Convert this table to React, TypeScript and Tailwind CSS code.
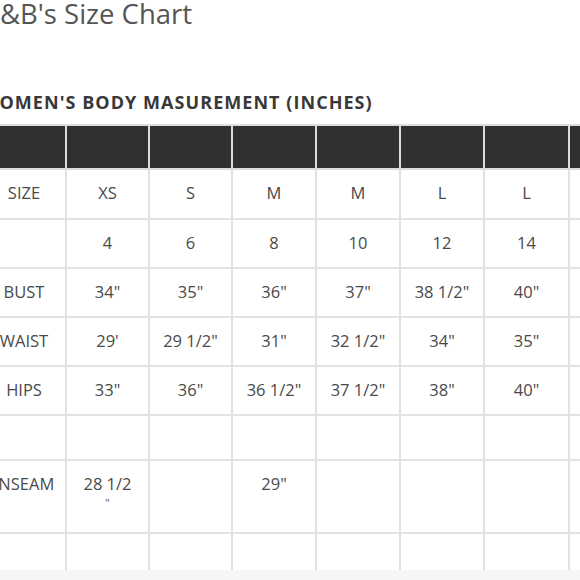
import React from 'react';

const cols = [84, 83, 83, 84, 84, 84, 85, 84];

type Row = { h: string; cells: string[][] };

const rows: Row[] = [
  { h: 'h-[50px]', cells: [['SIZE'], ['XS'], ['S'], ['M'], ['M'], ['L'], ['L'], ['']] },
  { h: 'h-[49px]', cells: [[''], ['4'], ['6'], ['8'], ['10'], ['12'], ['14'], ['']] },
  { h: 'h-[49px]', cells: [['BUST'], ['34"'], ['35"'], ['36"'], ['37"'], ['38 1/2"'], ['40"'], ['']] },
  { h: 'h-[49px]', cells: [['WAIST'], ["29'"], ['29 1/2"'], ['31"'], ['32 1/2"'], ['34"'], ['35"'], ['']] },
  { h: 'h-[49px]', cells: [['HIPS'], ['33"'], ['36"'], ['36 1/2"'], ['37 1/2"'], ['38"'], ['40"'], ['']] },
  { h: 'h-[45px]', cells: [[''], [''], [''], [''], [''], [''], [''], ['']] },
  { h: 'h-[73px]', cells: [['INSEAM'], ['28 1/2', '"'], [''], ['29"'], [''], [''], [''], ['']] },
  { h: 'h-[45px]', cells: [[''], [''], [''], [''], [''], [''], [''], ['']] },
];

const SizeChart: React.FC = () => {
  return (
    <div className="w-[580px] h-[580px] overflow-hidden bg-white font-['Open_Sans',sans-serif] flex flex-col">
      <div className="h-[570px] overflow-hidden">
        <h1 className="text-[27.5px] leading-[30px] text-[#555] mt-[-1px] whitespace-nowrap">&amp;B's Size Chart</h1>

        <h2 className="mt-[62px] ml-[-19px] text-[18px] leading-[22px] tracking-[1.05px] font-bold text-[#383838] whitespace-nowrap">
          WOMEN'S BODY MASUREMENT (INCHES)
        </h2>

        <table className="mt-[11px] ml-[-19px] border-collapse table-fixed w-[671px]">
          <colgroup>
            {cols.map((w, i) => (
              <col key={i} style={{ width: w }} />
            ))}
          </colgroup>
          <thead>
            <tr className="h-[44px]">
              {cols.map((_, i) => (
                <th key={i} className="bg-[#303030] border-2 border-[#dcdcdc]" />
              ))}
            </tr>
          </thead>
          <tbody>
            {rows.map((row, r) => (
              <tr key={r} className={row.h}>
                {row.cells.map((lines, c) => (
                  <td
                    key={c}
                    className="border-2 border-[#e2e2e2] align-top pt-[13px] text-center text-[16.5px] leading-[19px] text-[#4a4a4a]"
                  >
                    {lines.map((l, k) => (
                      <div key={k} className={k > 0 ? 'text-[11px]' : ''}>{l}</div>
                    ))}
                  </td>
                ))}
              </tr>
            ))}
          </tbody>
        </table>
      </div>
      <div className="flex-1 bg-[#f7f5f5]" />
    </div>
  );
};

export default function App() {
  return <SizeChart />;
}
